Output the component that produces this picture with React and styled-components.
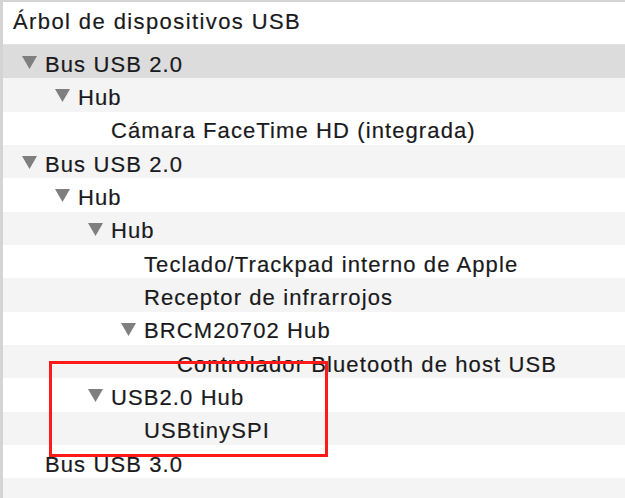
import React from 'react'
import styled, { createGlobalStyle } from 'styled-components'

const GlobalStyle = createGlobalStyle`
	html, body {
		margin: 0;
		padding: 0;
		background: #ffffff;
	}
	body {
		font-family: 'Liberation Sans', Arial, sans-serif;
		color: #1a1a1c;
		-webkit-text-stroke: 0.2px #1a1a1c;
	}
`

const Page = styled.div`
	position: relative;
	width: 625px;
	height: 498px;
	overflow: hidden;
`

const Frame = styled.div`
	height: 100%;
	box-sizing: border-box;
	border-top: 2px solid #d4d4d4;
	border-left: 3px solid #d4d4d4;
	background: #ffffff;
`

const Header = styled.div`
	height: 43px;
	box-sizing: border-box;
	padding: 0 0 4px 10px;
	line-height: 39px;
	font-size: 22px;
	letter-spacing: 1.4px;
	border-bottom: 1px solid #e4e4e4;
`

const Row = styled.div`
	display: flex;
	align-items: center;
	height: 33.33px;
	box-sizing: border-box;
	padding-left: ${p => (p.$leaf ? 42 : 19) + p.$level * 33}px;
	background: ${p => (p.$selected ? '#dcdcdc' : p.$stripe ? '#f4f4f4' : '#ffffff')};
	white-space: nowrap;
`

const Toggle = styled.svg`
	width: 15px;
	height: 13px;
	margin: 2px 8px 0 0;
	flex: none;
`

const Label = styled.span`
	font-size: 22px;
	letter-spacing: 1.1px;
	padding-top: 6px;
`

const Highlight = styled.div`
	position: absolute;
	left: 49px;
	top: 361px;
	width: 279px;
	height: 96px;
	box-sizing: border-box;
	border: 3px solid #ff1a1a;
	pointer-events: none;
`

const rows = [
	{ text: 'Bus USB 2.0', level: 0 },
	{ text: 'Hub', level: 1 },
	{ text: 'Cámara FaceTime HD (integrada)', level: 2, leaf: true },
	{ text: 'Bus USB 2.0', level: 0 },
	{ text: 'Hub', level: 1 },
	{ text: 'Hub', level: 2 },
	{ text: 'Teclado/Trackpad interno de Apple', level: 3, leaf: true },
	{ text: 'Receptor de infrarrojos', level: 3, leaf: true },
	{ text: 'BRCM20702 Hub', level: 3 },
	{ text: 'Controlador Bluetooth de host USB', level: 4, leaf: true },
	{ text: 'USB2.0 Hub', level: 2 },
	{ text: 'USBtinySPI', level: 3, leaf: true },
	{ text: 'Bus USB 3.0', level: 0, leaf: true },
	{ text: '', level: 0, leaf: true },
]

const Arrow = () => (
	<Toggle viewBox="0 0 15 13">
		<polygon points="0,0 15,0 7.5,13" fill="#7f7f7f" />
	</Toggle>
)

const App = () => (
	<Page>
		<GlobalStyle />
		<Frame>
			<Header>Árbol de dispositivos USB</Header>
			{rows.map((r, i) => (
				<Row key={i} $level={r.level} $leaf={r.leaf} $selected={i === 0} $stripe={i % 2 === 1}>
					{!r.leaf && <Arrow />}
					<Label>{r.text}</Label>
				</Row>
			))}
		</Frame>
		<Highlight />
	</Page>
)

export default App
